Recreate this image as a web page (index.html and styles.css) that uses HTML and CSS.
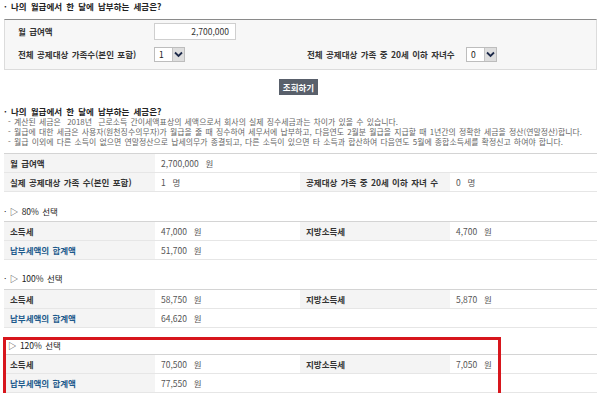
FILE: index.html
```html
<!DOCTYPE html>
<html lang="ko">
  <head>
    <meta charset="utf-8" />
    <title>나의 월급에서 한 달에 납부하는 세금은?</title>
    <link rel="stylesheet" href="styles.css">
  </head>
  <body>
    <div class="page">
      <h2 class="tit">· 나의 월급에서 한 달에 납부하는 세금은?</h2>

      <!-- 입력 영역 -->
      <div class="form-box">
        <div class="frow">
          <span class="flabel">월 급여액</span>
          <span class="inp">2,700,000</span>
        </div>
        <div class="frow">
          <div class="fcell">
            <span class="flabel">전체 공제대상 가족수(본인 포함)</span>
            <span class="sel">1<i class="arr"><svg width="9" height="7" viewBox="0 0 9 7"><path d="M1 1.5 L4.5 5 L8 1.5" fill="none" stroke="#1d2a4a" stroke-width="1.8"/></svg></i></span>
          </div>
          <div class="fcell">
            <span class="flabel wide">전체 공제대상 가족 중 20세 이하 자녀수</span>
            <span class="sel">0<i class="arr"><svg width="9" height="7" viewBox="0 0 9 7"><path d="M1 1.5 L4.5 5 L8 1.5" fill="none" stroke="#1d2a4a" stroke-width="1.8"/></svg></i></span>
          </div>
        </div>
      </div>

      <div class="btn-wrap"><button class="btn">조회하기</button></div>

      <h2 class="tit tit2">· 나의 월급에서 한 달에 납부하는 세금은?</h2>
      <ul class="notes">
        <li>- 계산된 세금은 &nbsp;2018년 &nbsp;근로소득 간이세액표상의 세액으로서 회사의 실제 징수세금과는 차이가 있을 수 있습니다.</li>
        <li>- 월급에 대한 세금은 사용자(원천징수의무자)가 월급을 줄 때 징수하여 세무서에 납부하고, 다음연도 2월분 월급을 지급할 때 1년간의 정확한 세금을 정산(연말정산)합니다.</li>
        <li>- 월급 이외에 다른 소득이 없으면 연말정산으로 납세의무가 종결되고, 다른 소득이 있으면 타 소득과 합산하여 다음연도 5월에 종합소득세를 확정신고 하여야 합니다.</li>
      </ul>

      <div class="tbl">
        <div class="th">월 급여액</div>
        <div class="td span3">2,700,000 &nbsp;원</div>
        <div class="th">실제 공제대상 가족 수(본인 포함)</div>
        <div class="td">1 &nbsp;명</div>
        <div class="th">공제대상 가족 중 20세 이하 자녀 수</div>
        <div class="td">0 &nbsp;명</div>
      </div>

      <h3 class="sub">· ▷ 80% 선택</h3>
      <div class="tbl">
        <div class="th">소득세</div>
        <div class="td">47,000 &nbsp;원</div>
        <div class="th">지방소득세</div>
        <div class="td">4,700 &nbsp;원</div>
        <div class="th blue">납부세액의 합계액</div>
        <div class="td span3">51,700 &nbsp;원</div>
      </div>

      <h3 class="sub sub2">· ▷ 100% 선택</h3>
      <div class="tbl">
        <div class="th">소득세</div>
        <div class="td">58,750 &nbsp;원</div>
        <div class="th">지방소득세</div>
        <div class="td">5,870 &nbsp;원</div>
        <div class="th blue">납부세액의 합계액</div>
        <div class="td span3">64,620 &nbsp;원</div>
      </div>

      <div class="pick">
        <h3 class="sub sub3">▷ 120% 선택</h3>
        <div class="tbl tbl3">
          <div class="th">소득세</div>
          <div class="td">70,500 &nbsp;원</div>
          <div class="th">지방소득세</div>
          <div class="td">7,050 &nbsp;원</div>
          <div class="th blue">납부세액의 합계액</div>
          <div class="td span3">77,550 &nbsp;원</div>
        </div>
      </div>
    </div>
  </body>
</html>
```

FILE: styles.css
```css
* {
  padding: 0;
  margin: 0;
  box-sizing: border-box;
  font-family: "Noto Sans CJK KR", "Noto Sans", sans-serif;
}

body {
  background-color: #ffffff;
  color: #333;
  font-size: 8.5px;
  word-spacing: 1px;
}

.page {
  width: 593px;
  margin-left: 4px;
}

.tit {
  font-size: 8.5px;
  font-weight: bold;
  line-height: 12px;
  height: 12px;
  color: #222;
  word-spacing: 1.8px;
}

.tit2 {
  margin-top: 10px;
}

/* 입력 영역 */
.form-box {
  margin-top: 7px;
  height: 51px;
  background-color: #f7f7f7;
  border: 1px solid #dcdcdc;
  border-top: 1px solid #8a8a8a;
  padding: 3px 0 0 13px;
  display: flex;
  flex-direction: column;
  gap: 7px;
}

.frow {
  display: flex;
  align-items: center;
}

.fcell {
  display: flex;
  align-items: center;
  width: 290px;
}

.flabel {
  width: 136px;
  font-weight: bold;
  color: #333;
  line-height: 15px;
}

.flabel.wide {
  width: 159px;
}

.inp {
  width: 82px;
  height: 17px;
  background: #fff;
  border: 1px solid #cfcfcf;
  text-align: right;
  padding-right: 6px;
  line-height: 15px;
  color: #333;
}

.sel {
  width: 31px;
  height: 15px;
  background: #fff;
  border: 1px solid #bdbdbd;
  display: flex;
  justify-content: space-between;
  padding-left: 4px;
  line-height: 13px;
  color: #222;
}

.sel .arr {
  width: 12px;
  height: 13px;
  background: #dedede;
  border-left: 1px solid #c4c4c4;
  display: flex;
  align-items: center;
  justify-content: center;
}

.btn-wrap {
  display: flex;
  justify-content: center;
  margin-top: 9px;
}

.btn {
  width: 39px;
  height: 16px;
  border: 0;
  background-color: #59606b;
  color: #fff;
  font-size: 8.5px;
  font-weight: bold;
  line-height: 16px;
  margin-left: -4px;
}

/* 안내 문구 */
.notes {
  list-style: none;
  padding-left: 4px;
  margin-bottom: 6px;
  color: #666;
  font-size: 7.9px;
  line-height: 10px;
  height: 30px;
  white-space: nowrap;
}

/* 결과 표 */
.tbl {
  display: grid;
  grid-template-columns: 151px 145px 150px 1fr;
  border-top: 1px solid #d4d4d4;
}

.th,
.td {
  height: 19px;
  line-height: 18px;
  border-bottom: 1px solid #e6e6e6;
}

.th {
  background-color: #f4f4f4;
  font-weight: bold;
  color: #333;
  padding-left: 6px;
}

.td {
  background-color: #fff;
  color: #555;
  padding-left: 6px;
}

.th.blue {
  color: #1c5a8c;
}

.span3 {
  grid-column: span 3;
}

.sub {
  font-size: 8.5px;
  font-weight: normal;
  line-height: 12px;
  height: 12px;
  margin: 13px 0 4px;
  color: #222;
}

.sub2 {
  margin: 12px 0 5px;
}

.sub3 {
  margin: 0 0 3px;
  padding-left: 4px;
}

/* 120% 선택 강조 */
.pick {
  position: relative;
  margin-top: 11px;
}

.pick::after {
  content: "";
  position: absolute;
  left: -1px;
  top: -2px;
  width: 492px;
  height: 58px;
  border: 3px solid #d7161d;
  pointer-events: none;
}
```
